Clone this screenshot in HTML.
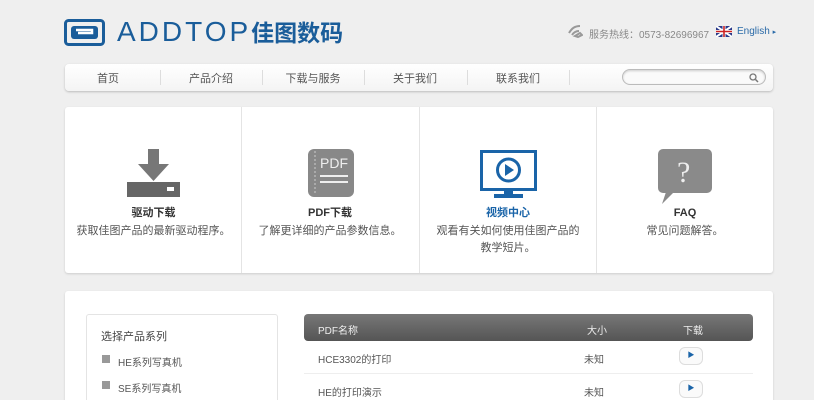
<!DOCTYPE html><html><head><meta charset="utf-8"><style>
*{margin:0;padding:0;box-sizing:border-box}
html,body{width:814px;height:400px;overflow:hidden}
body{background:#efefef;font-family:"Liberation Sans","Noto Sans CJK SC",sans-serif;position:relative;color:#555}
.a{position:absolute}
.nav{left:65px;top:64px;width:708px;height:27px;background:linear-gradient(#fff,#f4f4f4);border-radius:4px;box-shadow:0 1px 2px #bbb}
.nav span{position:absolute;top:6px;font-size:11px;color:#555;transform:translateX(-50%)}
.nav i{position:absolute;top:6px;width:1px;height:15px;background:#ddd}
.card{background:#fff;box-shadow:0 1px 2px #ccc;border-radius:3px}
.col{position:absolute;top:0;width:177px;height:166px;text-align:center}
.t{position:absolute;top:99px;left:0;width:100%;font-size:11px;font-weight:bold;color:#333;line-height:14px}
.d{position:absolute;top:116px;left:0;width:100%;font-size:11px;color:#555;line-height:17px}
</style></head><body>
<svg class="a" style="left:64px;top:19px" width="41" height="27" viewBox="0 0 41 27"><rect x="1.5" y="1.5" width="38" height="24" rx="3" fill="none" stroke="#1a5d9a" stroke-width="3"/><rect x="7" y="7" width="27" height="13" rx="3" fill="#1a5d9a"/><path d="M12 11h16v3H14" stroke="#fff" stroke-width="2.5" fill="none"/></svg>
<div class="a" style="left:117px;top:16px;font-size:28px;line-height:32px;color:#1a5d9a;letter-spacing:3px;white-space:nowrap">ADDTOP<span style="font-size:23px;font-weight:bold;letter-spacing:0">佳图数码</span></div>
<svg class="a" style="left:567px;top:24px" width="16" height="14" viewBox="0 0 16 14"><path d="M2 9c3-5 6-7 11-7M5 11c2-3 4-4 7-4M8 12l5-3 2 2-4 2z" stroke="#999" stroke-width="2" fill="none"/></svg>
<div class="a" style="left:589px;top:26px;font-size:10px;color:#888">服务热线：0573-82696967</div>
<svg class="a" style="left:716px;top:26px" width="16" height="11"><rect width="16" height="11" fill="#2a3a8a"/><path d="M0 0L16 11M16 0L0 11" stroke="#fff" stroke-width="2"/><path d="M8 0v11M0 5.5h16" stroke="#fff" stroke-width="3"/><path d="M8 0v11M0 5.5h16" stroke="#c22" stroke-width="1.6"/></svg>
<div class="a" style="left:737px;top:26px;font-size:10px;color:#2a6aa8">English <span style="font-size:7px">▸</span></div>
<div class="a nav">
<span style="left:43px">首页</span><i style="left:95px"></i>
<span style="left:146px">产品介绍</span><i style="left:197px"></i>
<span style="left:248px">下载与服务</span><i style="left:299px"></i>
<span style="left:350px">关于我们</span><i style="left:402px"></i>
<span style="left:453px">联系我们</span><i style="left:504px"></i>
<div class="a" style="left:557px;top:5px;width:144px;height:16px;border:1px solid #bbb;border-radius:8px;background:#fafafa;box-shadow:inset 0 1px 2px #ccc"><svg class="a" style="right:6px;top:3px" width="10" height="10"><circle cx="4" cy="4" r="3" stroke="#777" stroke-width="1.3" fill="none"/><path d="M6.5 6.5L9 9" stroke="#777" stroke-width="1.5"/></svg></div>
</div>
<div class="a card" style="left:65px;top:107px;width:708px;height:166px">
<div class="col" style="left:0"><svg class="a" style="left:62px;top:42px" width="53" height="48" viewBox="0 0 53 48"><rect x="21" y="0" width="11" height="16" fill="#777"/><path d="M11 15h31L26.5 32z" fill="#777"/><rect x="0" y="33" width="53" height="15" fill="#666"/><rect x="40" y="38" width="7" height="4" fill="#fff"/></svg><div class="t">驱动下载</div><div class="d">获取佳图产品的最新驱动程序。</div></div>
<div class="col" style="left:176px;border-left:1px solid #e4e4e4"><svg class="a" style="left:66px;top:42px" width="48" height="48"><rect width="46" height="48" rx="6" fill="#888"/><path d="M7 2v44" stroke="#ccc" stroke-dasharray="2 2"/><text x="12" y="19" font-family="Liberation Sans" font-size="14" fill="#eee">PDF</text><path d="M12 27h28M12 33h28" stroke="#eee" stroke-width="2"/></svg><div class="t">PDF下载</div><div class="d">了解更详细的产品参数信息。</div></div>
<div class="col" style="left:354px;border-left:1px solid #e4e4e4"><svg class="a" style="left:60px;top:43px" width="57" height="50"><rect x="1.5" y="1.5" width="54" height="38" fill="#fff" stroke="#1a64a8" stroke-width="3"/><circle cx="28.5" cy="20" r="11" fill="none" stroke="#1a64a8" stroke-width="3"/><path d="M25 14v12l9-6z" fill="#1a64a8"/><rect x="24" y="40" width="9" height="4" fill="#1a64a8"/><rect x="14" y="44" width="29" height="4" fill="#1a64a8"/></svg><div class="t" style="color:#1a64a8">视频中心</div><div class="d">观看有关如何使用佳图产品的<br>教学短片。</div></div>
<div class="col" style="left:531px;border-left:1px solid #e4e4e4"><svg class="a" style="left:61px;top:42px" width="56" height="56"><rect width="54" height="44" rx="5" fill="#8a8a8a"/><path d="M8 43l-4 12 12-12z" fill="#8a8a8a"/><text x="19" y="33" font-family="Liberation Serif" font-size="30" fill="#eee">?</text></svg><div class="t">FAQ</div><div class="d">常见问题解答。</div></div>
</div>
<div class="a card" style="left:65px;top:291px;width:708px;height:120px"></div>
<div class="a" style="left:86px;top:314px;width:192px;height:100px;border:1px solid #e4e4e4;border-radius:3px;background:#fff"></div>
<div class="a" style="left:101px;top:328px;font-size:11px;color:#444">选择产品系列</div>
<div class="a" style="left:102px;top:355px;width:8px;height:8px;background:#999"></div><div class="a" style="left:118px;top:354px;font-size:10px">HE系列写真机</div>
<div class="a" style="left:102px;top:381px;width:8px;height:8px;background:#999"></div><div class="a" style="left:118px;top:380px;font-size:10px">SE系列写真机</div>
<div class="a" style="left:304px;top:314px;width:449px;height:27px;border-radius:4px;background:linear-gradient(#777,#555)"></div>
<div class="a" style="left:318px;top:322px;font-size:10px;color:#eee">PDF名称</div>
<div class="a" style="left:587px;top:322px;font-size:10px;color:#eee">大小</div>
<div class="a" style="left:683px;top:322px;font-size:10px;color:#eee">下载</div>
<div class="a" style="left:318px;top:351px;font-size:10px">HCE3302的打印</div><div class="a" style="left:584px;top:351px;font-size:10px">未知</div>
<div class="a" style="left:304px;top:373px;width:449px;height:1px;background:#eee"></div>
<div class="a" style="left:318px;top:384px;font-size:10px">HE的打印演示</div><div class="a" style="left:584px;top:384px;font-size:10px">未知</div>
<div class="a" style="left:679px;top:347px;width:24px;height:18px;border:1px solid #ddd;border-radius:6px;background:#fafafa;color:#1a64a8;font-size:7px;text-align:center;line-height:16px">▶</div>
<div class="a" style="left:679px;top:380px;width:24px;height:18px;border:1px solid #ddd;border-radius:6px;background:#fafafa;color:#1a64a8;font-size:7px;text-align:center;line-height:16px">▶</div>
</body></html>
